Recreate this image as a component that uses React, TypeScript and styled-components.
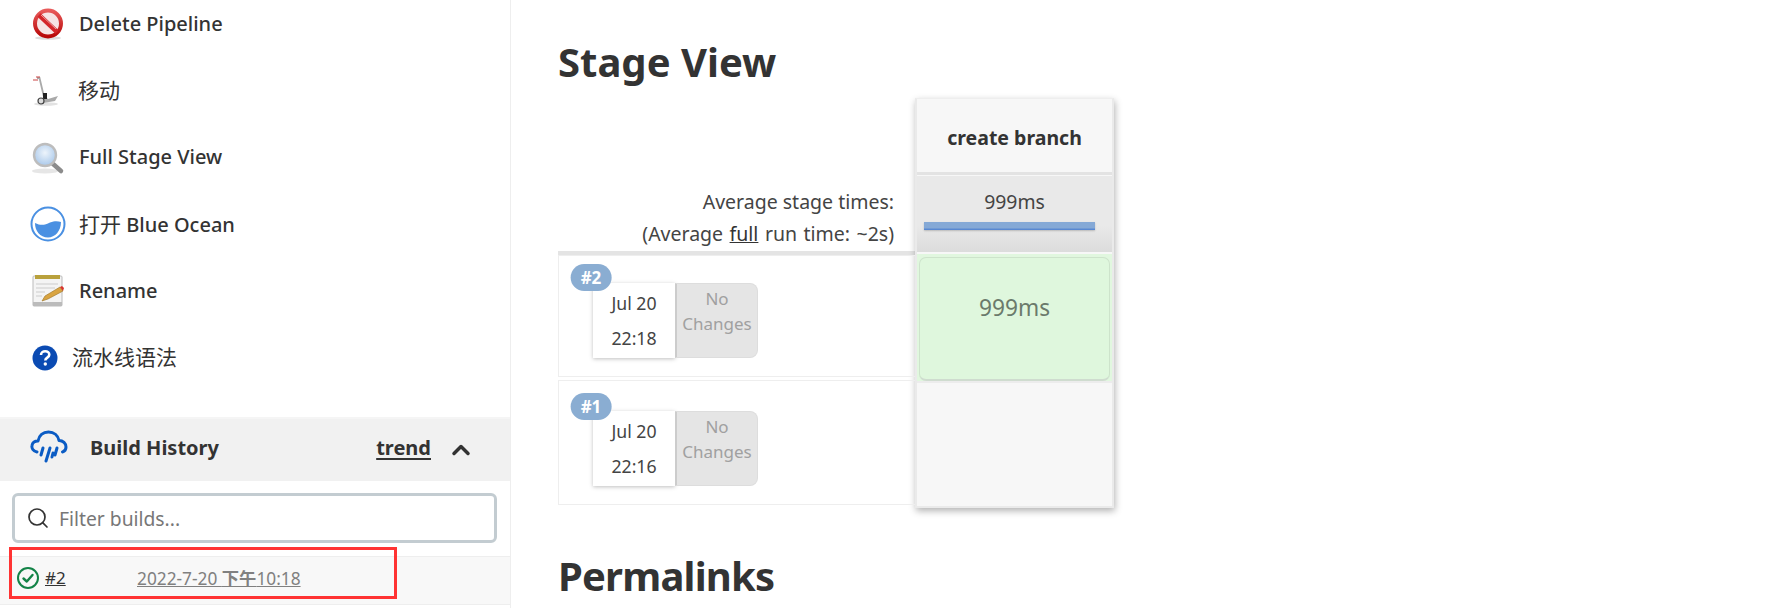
import React from 'react';
import styled, { createGlobalStyle } from 'styled-components';
import { Search, ChevronUp } from 'lucide-react';

const FONT = `"Noto Sans", "Noto Sans CJK SC", "Open Sans", sans-serif`;

const GlobalStyle = createGlobalStyle`
    html, body {
        margin: 0;
        padding: 0;
        background: #fff;
        overflow: hidden;
    }
    * {
        box-sizing: border-box;
    }
`;

const Page = styled.div`
    display: flex;
    width: 1768px;
    height: 608px;
    overflow: hidden;
    font-family: ${FONT};
    color: #333;
`;

const Sidebar = styled.aside`
    display: flex;
    flex-direction: column;
    width: 511px;
    flex: none;
    border-right: 1px solid #eee;
`;

/* page is scrolled a little, so the list starts above the window */
const TaskList = styled.div`
    display: flex;
    flex-direction: column;
    height: 428.4px;
    margin-top: -9.4px;
    flex: none;
    border-bottom: 2px solid #f5f5f5;
`;

const Task = styled.div`
    display: flex;
    align-items: center;
    height: 66.8px;
    flex: none;
    padding-bottom: 2px;
    font-size: 20px;
    font-weight: 500;
    color: #333;
`;

const TaskIcon = styled.span<{ $center: number; $textLeft: number }>`
    display: flex;
    justify-content: center;
    align-items: center;
    width: ${p => p.$center * 2}px;
    margin-right: ${p => p.$textLeft - p.$center * 2}px;
    margin-top: 2px;
    flex: none;
`;

const Cjk = styled.span`
    font-size: 21px;
    font-weight: 400;
`;

const CjkLabel = styled(Cjk)`
    vertical-align: 2px;
`;

const HistoryHeader = styled.div`
    display: flex;
    align-items: center;
    height: 62px;
    flex: none;
    padding: 0 0 6px 30px;
    background: #f1f1f1;
    font-size: 20px;
    font-weight: 700;
`;

const HistoryTitle = styled.span`
    margin-left: 22px;
    flex: 1;
`;

const TrendLink = styled.a`
    color: #333;
    text-decoration: underline;
    text-underline-offset: 3px;
`;

const CollapseButton = styled.span`
    display: flex;
    margin: 6px 35px 0 16px;
    color: #333;
`;

const FilterBar = styled.div`
    display: flex;
    align-items: center;
    gap: 9px;
    height: 50px;
    flex: none;
    margin: 12px 13px 13px 12px;
    padding-left: 11px;
    border: 3px solid #c3ccd1;
    border-radius: 6px;
    font-size: 19.3px;
    color: #777;
`;

const BuildRow = styled.div`
    position: relative;
    display: flex;
    align-items: center;
    height: 49px;
    flex: none;
    padding: 0 0 6px 16px;
    background: #f8f8f8;
    border-top: 1px solid #eee;
    border-bottom: 1px solid #eee;
`;

const BuildNumber = styled.a`
    margin-left: 5px;
    width: 92px;
    font-size: 17px;
    color: #333;
    text-decoration: underline;
`;

const BuildDate = styled.a`
    font-size: 17.3px;
    color: #808080;
    text-decoration: underline;
    b {
        font-weight: 700;
    }
`;

const RedMark = styled.div`
    position: absolute;
    left: 9px;
    top: -10px;
    width: 388px;
    height: 52px;
    border: 3px solid #ff3333;
`;

const Main = styled.main`
    flex: 1;
    padding-left: 47px;
    min-width: 0;
`;

const Heading = styled.h2`
    margin: 0;
    font-size: 40px;
    line-height: 54px;
    font-weight: 700;
    color: #333;
`;

const StageHeading = styled(Heading)`
    padding-top: 35px;
    height: 98px;
`;

const PermalinksHeading = styled(Heading)`
    margin-top: 41px;
    letter-spacing: -0.8px;
`;

const StageTable = styled.div`
    display: flex;
    align-items: flex-start;
`;

const RunColumn = styled.div`
    display: flex;
    flex-direction: column;
    width: 357px;
    flex: none;
`;

const Averages = styled.div`
    height: 157px;
    padding: 88px 21px 0 0;
    text-align: right;
    font-size: 19.5px;
    line-height: 31.5px;
    color: #444;
    border-bottom: 4px solid #e4e4e4;
    white-space: nowrap;
    a {
        color: #333;
        text-decoration: underline;
    }
`;

const TotalTime = styled.span`
    word-spacing: 1.4px;
`;

const RunRow = styled.div<{ $height: number }>`
    position: relative;
    height: ${p => p.$height}px;
    margin-bottom: 3px;
    border: 1px solid #eee;
    border-right: none;
`;

const RunBadge = styled.span<{ $top: number }>`
    position: absolute;
    left: 32px;
    top: ${p => p.$top}px;
    transform: translateX(-50%);
    display: flex;
    align-items: center;
    justify-content: center;
    height: 27px;
    padding: 0 10px;
    border-radius: 14px;
    background: #8aadd2;
    color: #fff;
    font-size: 17px;
    font-weight: 700;
    z-index: 1;
`;

const RunCard = styled.div<{ $top: number }>`
    position: absolute;
    left: 34px;
    top: ${p => p.$top}px;
    display: flex;
    height: 75px;
`;

const RunDate = styled.div`
    display: flex;
    flex-direction: column;
    justify-content: space-around;
    align-items: center;
    width: 82px;
    padding: 2px 0;
    background: #fff;
    box-shadow: 0 1px 4px rgba(0, 0, 0, 0.25);
    font-size: 17.7px;
    color: #444;
`;

const NoChanges = styled.div`
    width: 83px;
    padding-top: 2px;
    background: #e5e5e5;
    border: 1px solid #ddd;
    border-left: 2px solid #ccc;
    border-radius: 0 8px 8px 0;
    text-align: center;
    font-size: 17px;
    line-height: 25px;
    color: #a0a0a0;
`;

const StagePanel = styled.div`
    display: flex;
    flex-direction: column;
    width: 199px;
    height: 410px;
    flex: none;
    background: #f7f7f7;
    border: 2px solid #eaeaea;
    border-top: 1px solid #eee;
    box-shadow: 1px 3px 7px rgba(0, 0, 0, 0.3);
`;

const StageName = styled.div`
    display: flex;
    align-items: center;
    justify-content: center;
    height: 76px;
    flex: none;
    padding-top: 4px;
    font-size: 19.5px;
    font-weight: 700;
    color: #333;
    border-bottom: 3px solid #e3e3e3;
`;

const StageAverage = styled.div`
    height: 76px;
    flex: none;
    margin-top: 1px;
    padding-top: 13px;
    text-align: center;
    font-size: 19.4px;
    line-height: 25px;
    color: #444;
    background: linear-gradient(to bottom, #e9e9e9 65%, #dcdcdc 100%);
`;

const AverageBar = styled.div`
    width: 171px;
    height: 8px;
    margin: 8px 0 0 7px;
    background: linear-gradient(to bottom, #85a9d6 70%, #4d7fd0 100%);
    box-shadow: 0 1px 2px rgba(0, 0, 0, 0.2);
`;

const StageCellWrap = styled.div`
    height: 129px;
    flex: none;
    margin-top: 2px;
    padding: 3px 2px 0;
    background: #e1f7df;
    border-bottom: 2px solid #ececec;
`;

const StageCell = styled.div`
    display: flex;
    justify-content: center;
    height: 100%;
    padding-top: 34px;
    background: #dff7dd;
    border: 1px solid #cde3cb;
    border-bottom: 2px solid #cfdccf;
    border-radius: 7px;
    font-size: 22.7px;
    color: #6b7a6b;
`;

const DeleteIcon = () => (
    <svg width="32" height="32" viewBox="0 0 32 32">
        <defs>
            <linearGradient id="ringRed" x1="0" y1="0" x2="0" y2="1">
                <stop offset="0" stopColor="#e85a5a" />
                <stop offset="1" stopColor="#b80808" />
            </linearGradient>
        </defs>
        <ellipse cx="16" cy="30" rx="13" ry="1.800" fill="#ddd" />
        <circle cx="16" cy="15.500" r="13" fill="#f6e4e4" stroke="url(#ringRed)" strokeWidth="4" />
        <path d="M7 7 L25 24" stroke="#d4262a" strokeWidth="4.500" />
        <path d="M9 7 L24 21" stroke="#ee9c9c" strokeWidth="1" />
    </svg>
);

const MoveIcon = () => (
    <svg width="28" height="32" viewBox="0 0 28 32">
        <ellipse cx="14" cy="29" rx="12" ry="1.800" fill="#e2e2e2" />
        <path d="M5 3 L7.500 3 L12 22" fill="none" stroke="#aaa" strokeWidth="1.800" />
        <path d="M1 5 L6 5 M4 2 L8 2" stroke="#c44" strokeWidth="1.200" />
        <path d="M13 21 L16 24 L26 21 L23 26 L11 28 Z" fill="#a9a9a9" />
        <rect x="11" y="18" width="4" height="6" fill="#222" />
        <circle cx="9" cy="26" r="3" fill="#ddd" stroke="#444" strokeWidth="1.200" />
    </svg>
);

const SearchIcon = () => (
    <svg width="34" height="34" viewBox="0 0 34 34">
        <defs>
            <radialGradient id="lens" cx="0.5" cy="0.4" r="0.6">
                <stop offset="0" stopColor="#edf4fb" />
                <stop offset="1" stopColor="#a9c8ea" />
            </radialGradient>
        </defs>
        <ellipse cx="14" cy="30" rx="13" ry="2.500" fill="#e6e6e6" />
        <path d="M21 22 L30 30" stroke="#8c8c8c" strokeWidth="4.500" strokeLinecap="round" />
        <circle cx="14" cy="14" r="11" fill="url(#lens)" stroke="#bdbdbd" strokeWidth="2.400" />
    </svg>
);

const OceanIcon = () => (
    <svg width="36" height="36" viewBox="0 0 36 36">
        <circle cx="18" cy="18" r="16.500" fill="#fff" stroke="#4a90e2" strokeWidth="2" />
        <path d="M5 17 C11 20 15 19 20 16.500 C25 14.500 28 15 31 16 C31 25 25 31.500 18 31.500 C10 31.500 5 25 5 17 Z" fill="#4a90e2" />
    </svg>
);

const RenameIcon = () => (
    <svg width="34" height="34" viewBox="0 0 34 34">
        <rect x="2" y="2" width="29" height="30" rx="1" fill="#f4f4f4" stroke="#bbb" />
        <rect x="2" y="28" width="29" height="4" fill="#bbb" />
        <rect x="4" y="1" width="25" height="4" fill="#b9a13c" />
        <path d="M5 10 H27 M5 14 H24 M5 18 H14 M5 22 H11" stroke="#ccc" strokeWidth="1" />
        <path d="M11 27 L14 22 L29 13 L32 17 L17 25 Z" fill="#d9a441" stroke="#9a7224" strokeWidth="0.600" />
        <path d="M29 13 L32 17 L33 14 L31 12 Z" fill="#d8342c" />
    </svg>
);

const HelpIcon = () => (
    <svg width="26" height="26" viewBox="0 0 26 26">
        <circle cx="13" cy="13" r="12.500" fill="#0b4bb3" />
        <path d="M9 10 C9 7.500 11 6.300 13.200 6.300 C15.600 6.300 17.300 7.800 17.300 9.800 C17.300 12.600 13.300 12.600 13.300 15.400" fill="none" stroke="#fff" strokeWidth="2.600" />
        <circle cx="13.300" cy="19" r="1.700" fill="#fff" />
    </svg>
);

const RainIcon = () => (
    <svg width="38" height="34" viewBox="0 0 38 34" fill="none" stroke="#0b5cc4" strokeWidth="3" strokeLinecap="round" strokeLinejoin="round">
        <path d="M7 22 C3 21 1.500 18 2 15.500 C2.500 12.500 5 11 8 11 C9 5.500 13 2 18.500 2 C24 2 28 5.500 29 10.500 C33 10.500 36 13.500 36 17 C36 19.500 34.500 21.500 32.500 22" />
        <path d="M13 18 L11 25 M20 18 L16 31 M27 18 L25 25 M23 23 L22 27" />
    </svg>
);

const SuccessIcon = () => (
    <svg width="24" height="24" viewBox="0 0 24 24" fill="none" stroke="#138347" strokeLinecap="round" strokeLinejoin="round">
        <circle cx="12" cy="12" r="10" strokeWidth="2" />
        <path d="M7.500 12.500 L10.800 15.500 L16.500 9" strokeWidth="2.400" />
    </svg>
);

const tasks = [
    { key: 'delete', text: 'Delete Pipeline', left: 79, center: 48, icon: <DeleteIcon /> },
    { key: 'move', text: <CjkLabel>移动</CjkLabel>, left: 78, center: 46, icon: <MoveIcon /> },
    { key: 'stage', text: 'Full Stage View', left: 79, center: 48, icon: <SearchIcon /> },
    { key: 'ocean', text: <><Cjk>打开</Cjk> Blue Ocean</>, left: 79, center: 48, icon: <OceanIcon /> },
    { key: 'rename', text: 'Rename', left: 79, center: 48, icon: <RenameIcon /> },
    { key: 'syntax', text: <CjkLabel>流水线语法</CjkLabel>, left: 72, center: 45, icon: <HelpIcon /> },
];

const runs = [
    { id: '#2', date: 'Jul 20', time: '22:18', height: 122, badgeTop: 8, cardTop: 27 },
    { id: '#1', date: 'Jul 20', time: '22:16', height: 125, badgeTop: 12, cardTop: 30 },
];

const App: React.FC = () => {
    return (
        <Page>
            <GlobalStyle />
            <Sidebar>
                <TaskList>
                    {tasks.map(task => (
                        <Task key={task.key}>
                            <TaskIcon $center={task.center} $textLeft={task.left}>{task.icon}</TaskIcon>
                            <span>{task.text}</span>
                        </Task>
                    ))}
                </TaskList>
                <HistoryHeader>
                    <RainIcon />
                    <HistoryTitle>Build History</HistoryTitle>
                    <TrendLink>trend</TrendLink>
                    <CollapseButton>
                        <ChevronUp size={28} strokeWidth={3} />
                    </CollapseButton>
                </HistoryHeader>
                <FilterBar>
                    <Search size={24} color="#333" strokeWidth={1.7} />
                    Filter builds...
                </FilterBar>
                <BuildRow>
                    <SuccessIcon />
                    <BuildNumber>#2</BuildNumber>
                    <BuildDate>2022-7-20 <b>下午</b>10:18</BuildDate>
                    <RedMark />
                </BuildRow>
            </Sidebar>
            <Main>
                <StageHeading>Stage View</StageHeading>
                <StageTable>
                    <RunColumn>
                        <Averages>
                            Average stage times:
                            <br />
                            <TotalTime>(Average <a>full</a> run time: ~2s)</TotalTime>
                        </Averages>
                        {runs.map(run => (
                            <RunRow key={run.id} $height={run.height}>
                                <RunBadge $top={run.badgeTop}>{run.id}</RunBadge>
                                <RunCard $top={run.cardTop}>
                                    <RunDate>
                                        <span>{run.date}</span>
                                        <span>{run.time}</span>
                                    </RunDate>
                                    <NoChanges>
                                        No
                                        <br />
                                        Changes
                                    </NoChanges>
                                </RunCard>
                            </RunRow>
                        ))}
                    </RunColumn>
                    <StagePanel>
                        <StageName>create branch</StageName>
                        <StageAverage>
                            999ms
                            <AverageBar />
                        </StageAverage>
                        <StageCellWrap>
                            <StageCell>999ms</StageCell>
                        </StageCellWrap>
                    </StagePanel>
                </StageTable>
                <PermalinksHeading>Permalinks</PermalinksHeading>
            </Main>
        </Page>
    );
};

export default App;
